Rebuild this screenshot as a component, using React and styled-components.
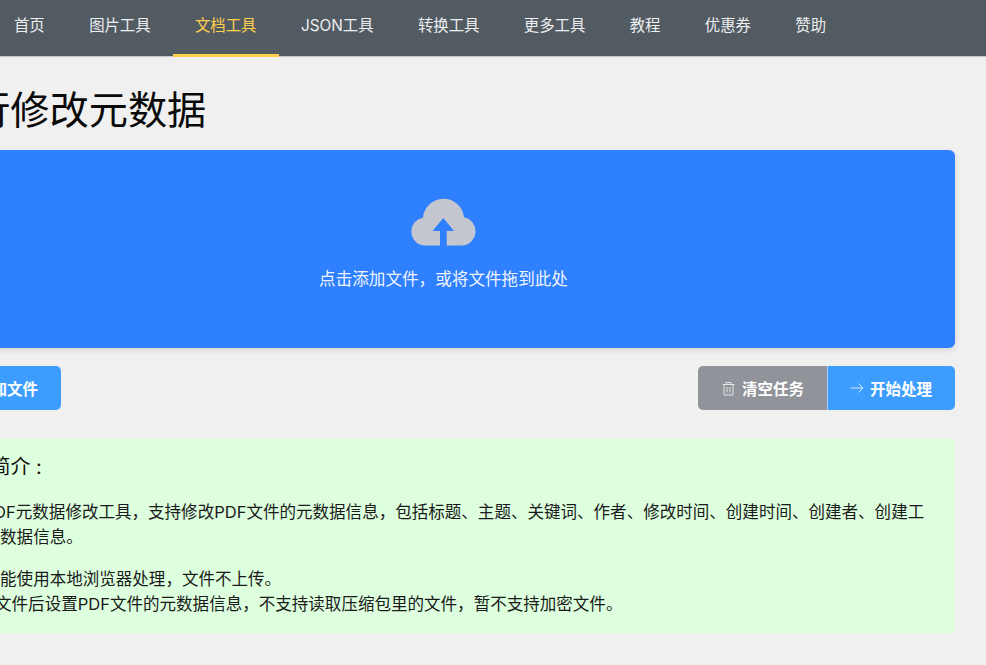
import React from "react";
import styled, { createGlobalStyle } from "styled-components";

const Global = createGlobalStyle`
  html, body { margin: 0; padding: 0; background: #f0f0f0; overflow: hidden; }
  body { font-family: "Inter", "Noto Sans CJK SC", sans-serif; color: #111; }
`;
const Nav = styled.nav`
  height: 56px;
  background: #525a62;
  border-bottom: 1px solid #c4c8cc;
  display: flex;
  margin-left: -8.2px;
`;
const NavItem = styled.a`
  height: 57px;
  box-sizing: border-box;
  padding: 0 22.2px 7px;
  display: flex;
  align-items: center;
  font-size: 15.38px;
  white-space: nowrap;
  color: ${(p) => (p.$active ? "#ffd04b" : "#eceef0")};
  border-bottom: 3px solid ${(p) => (p.$active ? "#ffd04b" : "transparent")};
`;
const Main = styled.main`
  margin: 0 31px 0 -68px;
`;
const Title = styled.h1`
  margin: 26px 0 13px;
  font-size: 39.2px;
  line-height: 54px;
  font-weight: 400;
  color: #0a0a0a;
  white-space: nowrap;
`;
const Drop = styled.div`
  height: 198px;
  background: #2f80ff;
  border-radius: 6px;
  box-shadow: 0 2px 6px rgba(0, 0, 0, 0.12);
  display: flex;
  flex-direction: column;
  align-items: center;
  padding-top: 47px;
  box-sizing: border-box;
`;
const DropText = styled.div`
  color: #eef4ff;
  font-size: 16.6px;
  line-height: 24px;
  margin-top: 21px;
`;
const Toolbar = styled.div`
  margin-top: 18px;
  display: flex;
  justify-content: space-between;
`;
const Btn = styled.button`
  height: 44px;
  box-sizing: border-box;
  border: 0;
  padding: 0 23px 0 ${(p) => (p.$split ? "22px" : "24px")};
  font: 600 15.5px "Inter", "Noto Sans CJK SC", sans-serif;
  color: #fff;
  background: ${(p) => (p.$grey ? "#909399" : "#3c9dff")};
  border-radius: ${(p) => p.$radius || "5px"};
  border-left: ${(p) => (p.$split ? "1px solid #a8cdf5" : "0")};
  display: flex;
  align-items: center;
  gap: ${(p) => (p.$grey ? "5.5px" : "6px")};
  white-space: nowrap;
`;
const Group = styled.div`
  display: flex;
`;
const Info = styled.section`
  margin-top: 29px;
  height: 194px;
  box-sizing: border-box;
  background: #ddffdd;
  padding: 13px 24px 0 18.5px;
`;
const InfoTitle = styled.h3`
  margin: 0 0 18px;
  font-size: 20px;
  line-height: 30px;
  font-weight: 400;
`;
const Para = styled.p`
  margin: 0 0 18px;
  font-size: 16.55px;
  line-height: 24.5px;
  color: #1a1a1a;
`;
const Cloud = styled.svg`
  width: 65px;
  height: 49px;
  display: block;
`;

const items = ["首页", "图片工具", "文档工具", "JSON工具", "转换工具", "更多工具", "教程", "优惠券", "赞助"];

export default function App() {
  return (
    <>
      <Global />
      <Nav>
        {items.map((t) => (
          <NavItem key={t} $active={t === "文档工具"}>{t}</NavItem>
        ))}
      </Nav>
      <Main>
        <Title>进行修改元数据</Title>
        <Drop>
          <Cloud viewBox="0 0 65 49">
            <path
              fill="#c4c7cf"
              fillRule="evenodd"
              d="M14 48.500A14 14 0 0 1 12 20.700A20.600 20.600 0 0 1 53 20.200A14.300 14.300 0 0 1 51 48.500L35.700 48.500V34H43L32.300 21L21.500 34H29V48.500Z"
            />
          </Cloud>
          <DropText>点击添加文件，或将文件拖到此处</DropText>
        </Drop>
        <Toolbar>
          <Btn>
            <svg width="14" height="14" viewBox="0 0 14 14" fill="none" stroke="#fff" strokeWidth="1">
              <path d="M7 1V13M1 7H13" />
            </svg>
            添加文件
          </Btn>
          <Group>
            <Btn $grey $radius="5px 0 0 5px">
              <svg width="14" height="15" viewBox="0 0 14 15" fill="none" stroke="#e4e5e8" strokeWidth="1">
                <path d="M0.500 3.500H12.500M4 3.500V1.500H9V3.500M2 3.500V14H11V3.500M5 6V11.500M8 6V11.500" />
              </svg>
              清空任务
            </Btn>
            <Btn $split $radius="0 5px 5px 0">
              <svg width="14" height="12" viewBox="0 0 14 12" fill="none" stroke="#d6e9ff" strokeWidth="1">
                <path d="M0.500 6H13M8.500 1.500L13 6 8.500 10.500" />
              </svg>
              开始处理
            </Btn>
          </Group>
        </Toolbar>
        <Info>
          <InfoTitle>功能简介 :</InfoTitle>
          <Para>一款PDF元数据修改工具，支持修改PDF文件的元数据信息，包括标题、主题、关键词、作者、修改时间、创建时间、创建者、创建工具的元数据信息。</Para>
          <Para>
            所有功能使用本地浏览器处理，文件不上传。
            <br />
            1.添加文件后设置PDF文件的元数据信息，不支持读取压缩包里的文件，暂不支持加密文件。
          </Para>
        </Info>
      </Main>
    </>
  );
}
